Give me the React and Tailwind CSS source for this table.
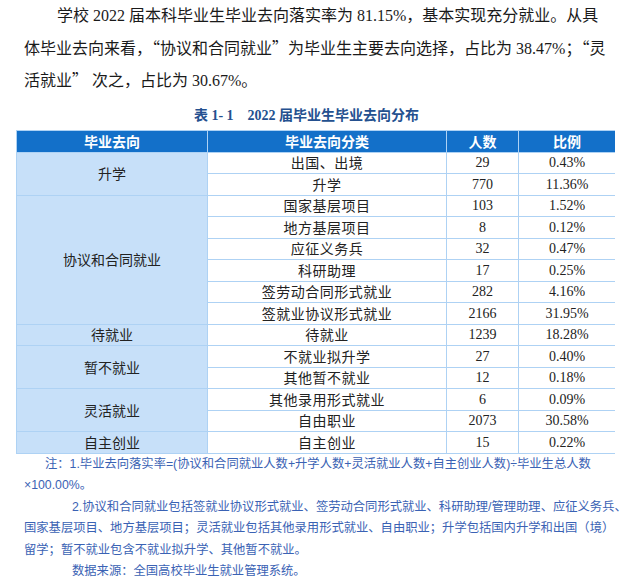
import React from 'react';

const groups = [
       { name: '升学', rows: [['出国、出境', 29, '0.43%'], ['升学', 770, '11.36%']] },
       {
              name: '协议和合同就业',
              rows: [
                     ['国家基层项目', 103, '1.52%'],
                     ['地方基层项目', 8, '0.12%'],
                     ['应征义务兵', 32, '0.47%'],
                     ['科研助理', 17, '0.25%'],
                     ['签劳动合同形式就业', 282, '4.16%'],
                     ['签就业协议形式就业', 2166, '31.95%'],
              ],
       },
       { name: '待就业', rows: [['待就业', 1239, '18.28%']] },
       { name: '暂不就业', rows: [['不就业拟升学', 27, '0.40%'], ['其他暂不就业', 12, '0.18%']] },
       { name: '灵活就业', rows: [['其他录用形式就业', 6, '0.09%'], ['自由职业', 2073, '30.58%']] },
       { name: '自主创业', rows: [['自主创业', 15, '0.22%']] },
];

const spans = { 1: 'row-span-1', 2: 'row-span-2', 6: 'row-span-6' };

const cjk = { fontFamily: '"Liberation Serif", "Noto Sans CJK SC", serif' };
const Q = ({ children }) => <span className="font-['Noto_Sans_CJK_SC']">{children}</span>;

export default function App() {
       return (
              <div className="w-[631px] h-[582px] bg-white overflow-hidden text-[#1a1a1a]">
                     {/* intro paragraph */}
                     <div className="px-[24px] text-[16px] leading-[31.5px] font-['Liberation_Serif','Noto_Sans_CJK_SC',serif] whitespace-nowrap">
                            <p className="pl-[33px]">学校 2022 届本科毕业生毕业去向落实率为 81.15%，基本实现充分就业。从具</p>
                            <p>体毕业去向来看，<Q>“</Q>协议和合同就业<Q>”</Q>为毕业生主要去向选择，占比为 38.47%；<Q>“</Q>灵</p>
                            <p>活就业<Q>”</Q> 次之，占比为 30.67%。</p>
                     </div>

                     {/* table title */}
                     <div className="mt-[6px] h-[26px] leading-[26px] text-center text-[14px] font-bold text-[#24508f] font-['Liberation_Serif','Noto_Sans_CJK_SC',serif] pr-[18px] whitespace-pre">
                            表 1- 1{'    '}2022 届毕业生毕业去向分布
                     </div>

                     {/* table */}
                     <div className="px-4 mt-[1px]">
                            <div className="grid grid-cols-[190px_238px_71px_96px] grid-rows-[21px_repeat(14,20.5px)] gap-px p-px bg-[#aed2f4] text-[14px] font-['Liberation_Serif','Noto_Sans_CJK_SC',sans-serif]">
                                   {['毕业去向', '毕业去向分类', '人数', '比例'].map((h) => (
                                          <div key={h} className="bg-[#1370c9] text-white font-bold flex items-center justify-center font-['Noto_Sans_CJK_SC',sans-serif]">
                                                 {h}
                                          </div>
                                   ))}
                                   {groups.map((g) => (
                                          <React.Fragment key={g.name}>
                                                 <div className={`${spans[g.rows.length]} bg-[#c7e0f9] flex items-center justify-center text-[#222] font-['Noto_Sans_CJK_SC',sans-serif]`}>
                                                        {g.name}
                                                 </div>
                                                 {g.rows.map((r) => (
                                                        <React.Fragment key={r[0]}>
                                                               <div className="bg-white flex items-center justify-center text-[#222] tracking-[0.5px] font-['Noto_Sans_CJK_SC',sans-serif]">{r[0]}</div>
                                                               <div className="bg-white flex items-center justify-center text-[#222] font-['Liberation_Serif',serif]">{r[1]}</div>
                                                               <div className="bg-white flex items-center justify-center text-[#222] font-['Liberation_Serif',serif]">{r[2]}</div>
                                                        </React.Fragment>
                                                 ))}
                                          </React.Fragment>
                                   ))}
                            </div>
                     </div>

                     {/* notes */}
                     <div className="px-[24px] text-[12.3px] leading-[21.6px] text-[#3a62b4] font-['Liberation_Sans','Noto_Sans_CJK_SC',sans-serif] whitespace-nowrap">
                            <p className="pl-[21px]">注：1.毕业去向落实率=(协议和合同就业人数+升学人数+灵活就业人数+自主创业人数)÷毕业生总人数</p>
                            <p>×100.00%。</p>
                            <p className="pl-[48px]">2.协议和合同就业包括签就业协议形式就业、签劳动合同形式就业、科研助理/管理助理、应征义务兵、</p>
                            <p>国家基层项目、地方基层项目；灵活就业包括其他录用形式就业、自由职业；升学包括国内升学和出国（境）</p>
                            <p>留学；暂不就业包含不就业拟升学、其他暂不就业。</p>
                            <p className="pl-[48px]">数据来源：全国高校毕业生就业管理系统。</p>
                     </div>
              </div>
       );
}
